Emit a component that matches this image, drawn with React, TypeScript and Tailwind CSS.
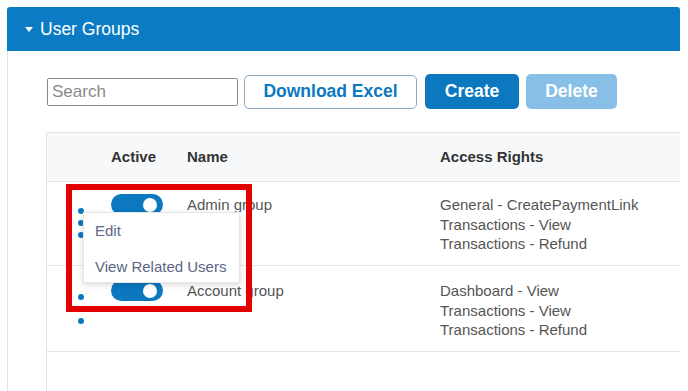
import React from "react";

type Group = {
  name: string;
  rights: string[];
  pad: string;
  height: string;
};

const groups: Group[] = [
  {
    name: "Admin group",
    rights: ["General - CreatePaymentLink", "Transactions - View", "Transactions - Refund"],
    pad: "pt-[12px]",
    height: "h-[84px]",
  },
  {
    name: "Account group",
    rights: ["Dashboard - View", "Transactions - View", "Transactions - Refund"],
    pad: "pt-[14px]",
    height: "h-[86px]",
  },
];

const Dots = () => (
  <div className="flex flex-col gap-[6px] mt-[14px]">
    <span className="w-[6px] h-[6px] rounded-full bg-[#0b78c0]" />
    <span className="w-[6px] h-[6px] rounded-full bg-[#0b78c0]" />
    <span className="w-[6px] h-[6px] rounded-full bg-[#0b78c0]" />
  </div>
);

const Toggle = () => (
  <div className="w-[52px] h-[21px] rounded-full bg-[#0b78c0] flex items-center justify-end pr-[6px]">
    <span className="w-[14px] h-[14px] rounded-full bg-white" />
  </div>
);

const App = () => {
  return (
    <div className="relative w-[688px] h-[391px] overflow-hidden bg-white font-['Liberation_Sans',Arial,sans-serif]">
      <div className="ml-[7px] mt-[7px] w-[673px]">
        <div className="h-[44px] bg-[#0b7cc4] rounded-t-[3px] flex items-center pl-[18px] text-white text-[17.5px]">
          <svg width="8" height="5" viewBox="0 0 8 5" className="mr-[7px]">
            <path d="M0 0 L8 0 L4 5 Z" fill="white" />
          </svg>
          User Groups
        </div>

        <div className="border-l border-[#e2e2e2] h-[340px]">
          <div className="flex items-center pl-[39px] pt-[23px]">
            <div className="w-[191px] h-[28px] border border-[#8a8a8a] rounded-[2px] flex items-center px-[4px] text-[17px] text-[#8a8a8a]">
              Search
            </div>
            <button className="ml-[6px] w-[173px] h-[34px] rounded-[5px] border border-[#8ea9c4] bg-white text-[#0b78c0] font-bold text-[17.5px]">
              Download Excel
            </button>
            <button className="ml-[8px] w-[94px] h-[35px] rounded-[5px] bg-[#0b78c0] text-white font-bold text-[17.5px]">
              Create
            </button>
            <button className="ml-[7px] w-[91px] h-[35px] rounded-[5px] bg-[#87bfe6] text-white font-bold text-[17.5px]">
              Delete
            </button>
          </div>

          <div className="ml-[38px] mt-[23px] border-l border-t border-[#e4e4e4] h-[260px]">
            <div className="flex items-center h-[49px] bg-[#f7f8fa] border-b border-[#e4e4e4] text-[15px] font-bold text-[#333]">
              <div className="w-[64px]" />
              <div className="w-[76px]">Active</div>
              <div className="w-[253px]">Name</div>
              <div>Access Rights</div>
            </div>

            {groups.map((g) => (
              <div key={g.name} className={`flex ${g.height} ${g.pad} border-b border-[#e4e4e4] text-[15px] text-[#555] leading-[19.5px]`}>
                <div className="w-[64px] pl-[31px]">
                  <Dots />
                </div>
                <div className="w-[76px]">
                  <Toggle />
                </div>
                <div className="w-[253px] pt-[1px]">{g.name}</div>
                <div className="pt-[1px]">
                  {g.rights.map((r) => (
                    <div key={r}>{r}</div>
                  ))}
                </div>
              </div>
            ))}
          </div>
        </div>
      </div>

      <div className="absolute left-[83px] top-[212px] w-[157px] h-[71px] bg-white border border-[#e6e6e6] shadow-[0_2px_6px_rgba(0,0,0,0.15)] text-[15px] text-[#5b6585]">
        <div className="pl-[11px] pt-[9px] leading-[18px]">Edit</div>
        <div className="pl-[11px] pt-[18px] leading-[18px]">View Related Users</div>
      </div>

      <div className="absolute left-[66px] top-[184px] w-[186px] h-[128px] border-[6px] border-[#e30000]" />
    </div>
  );
};

export default App;
